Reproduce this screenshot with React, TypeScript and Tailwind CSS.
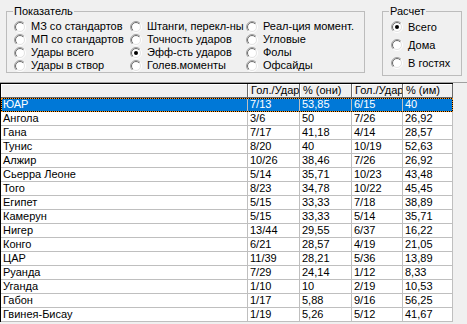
import React from 'react'

const colW = ['w-[247px]', 'w-[52px]', 'w-[52px]', 'w-[51px]', 'w-[50px]']

const headers = ['', 'Гол./Удар', '% (они)', 'Гол./Удар', '% (им)']

const rows: string[][] = [
  ['ЮАР', '7/13', '53,85', '6/15', '40'],
  ['Ангола', '3/6', '50', '7/26', '26,92'],
  ['Гана', '7/17', '41,18', '4/14', '28,57'],
  ['Тунис', '8/20', '40', '10/19', '52,63'],
  ['Алжир', '10/26', '38,46', '7/26', '26,92'],
  ['Сьерра Леоне', '5/14', '35,71', '10/23', '43,48'],
  ['Того', '8/23', '34,78', '10/22', '45,45'],
  ['Египет', '5/15', '33,33', '7/18', '38,89'],
  ['Камерун', '5/15', '33,33', '5/14', '35,71'],
  ['Нигер', '13/44', '29,55', '6/37', '16,22'],
  ['Конго', '6/21', '28,57', '4/19', '21,05'],
  ['ЦАР', '11/39', '28,21', '5/36', '13,89'],
  ['Руанда', '7/29', '24,14', '1/12', '8,33'],
  ['Уганда', '1/10', '10', '2/19', '10,53'],
  ['Габон', '1/17', '5,88', '9/16', '56,25'],
  ['Гвинея-Бисау', '1/19', '5,26', '5/12', '41,67'],
]

// listed column by column
const indicators = [
  { label: 'МЗ со стандартов' },
  { label: 'МП со стандартов' },
  { label: 'Удары всего' },
  { label: 'Удары в створ' },
  { label: 'Штанги, перекл-ны' },
  { label: 'Точность ударов' },
  { label: 'Эфф-сть ударов', checked: true },
  { label: 'Голев.моменты' },
  { label: 'Реал-ция момент.' },
  { label: 'Угловые' },
  { label: 'Фолы' },
  { label: 'Офсайды' },
]

const modes = [{ label: 'Всего', checked: true }, { label: 'Дома' }, { label: 'В гостях' }]

function Radio({ checked }: { checked?: boolean }) {
  return (
    <svg width="12" height="12" viewBox="0 0 12 12" className="shrink-0">
      <defs>
        <linearGradient id="radioOuter" x1="0" y1="0" x2="1" y2="1">
          <stop offset="0.5" stopColor="#a0a0a0" />
          <stop offset="0.5" stopColor="#ffffff" />
        </linearGradient>
        <linearGradient id="radioInner" x1="0" y1="0" x2="1" y2="1">
          <stop offset="0.5" stopColor="#696969" />
          <stop offset="0.5" stopColor="#e3e3e3" />
        </linearGradient>
      </defs>
      <circle cx="6" cy="6" r="5.5" fill="none" stroke="url(#radioOuter)" />
      <circle cx="6" cy="6" r="4.5" fill="#fff" stroke="url(#radioInner)" />
      {checked && <circle cx="6" cy="6" r="2" fill="#000" />}
    </svg>
  )
}

function Option({ label, checked }: { label: string; checked?: boolean }) {
  return (
    <div className="flex items-center gap-[5px] overflow-hidden whitespace-nowrap">
      <Radio checked={checked} />
      <span>{label}</span>
    </div>
  )
}

export default function App() {
  return (
    <div className="w-[467px] h-[324px] overflow-hidden bg-[#f0f0f0] text-[11px] leading-[13px] text-black font-['Liberation_Sans',Arial,sans-serif]">
      {/* group boxes */}
      <div className="flex items-start h-[82px] pt-[5px]">
        <fieldset className="ml-[6px] w-[359px] h-[68px] border border-[#bcbcbc] pl-[7px] pt-[2px]">
          <legend className="-ml-[1px] px-[1px]">Показатель</legend>
          <div className="grid grid-flow-col grid-rows-[13px_13px_13px_13px] grid-cols-[116px_116px_116px]">
            {indicators.map((o) => (
              <Option key={o.label} label={o.label} checked={o.checked} />
            ))}
          </div>
        </fieldset>

        <fieldset className="ml-[17px] w-[80px] h-[71px] border border-[#bcbcbc] pl-[8px]">
          <legend className="-ml-[2px] px-[1px]">Расчет</legend>
          <div className="grid grid-rows-[18px_18px_18px]">
            {modes.map((o) => (
              <Option key={o.label} label={o.label} checked={o.checked} />
            ))}
          </div>
        </fieldset>
      </div>

      {/* string grid */}
      <div className="border-t border-[#a0a0a0]">
        <div className="w-[453px] border-t border-l border-black">
          <div className="flex h-[14px]">
            {headers.map((h, i) => (
              <div
                key={i}
                className={`${colW[i]} shrink-0 overflow-hidden whitespace-nowrap border-r border-b border-[#696969] pl-[3px] shadow-[inset_1px_1px_0_#ffffff]`}
              >
                {h}
              </div>
            ))}
          </div>

          {rows.map((r, ri) => (
            <div
              key={r[0]}
              className={`relative flex h-[14px] ${ri === 0 ? 'bg-[#0078d7] text-white' : 'bg-white'}`}
            >
              {r.map((c, ci) => (
                <div
                  key={ci}
                  className={`${colW[ci]} shrink-0 overflow-hidden whitespace-nowrap border-r border-b border-[#bfbfbf] pl-[2px]`}
                >
                  {c}
                </div>
              ))}
              {ri === 0 && (
                <>
                  <div className="absolute inset-0 border border-black" />
                  <div className="absolute inset-0 border border-dotted border-[#ff9a1f]" />
                </>
              )}
            </div>
          ))}
        </div>
      </div>
    </div>
  )
}
